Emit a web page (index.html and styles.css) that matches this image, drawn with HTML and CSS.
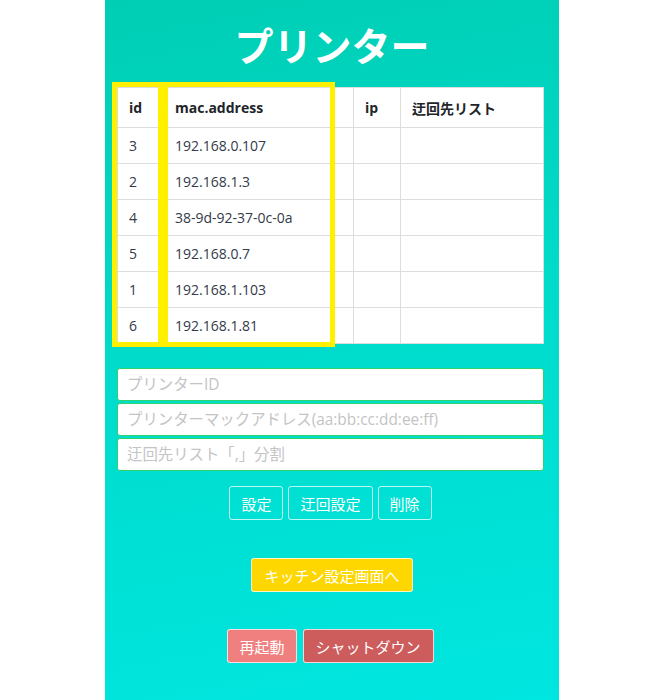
FILE: index.html
```html
<!DOCTYPE html>
<html lang="ja">
<head>
    <meta charset="UTF-8">
    <meta name="viewport" content="width=device-width, initial-scale=1.0">
    <title>プリンター</title>
    <link rel="stylesheet" href="styles.css">
</head>
<body>
    <div class="panel">
        <h1 class="title">プリンター</h1>

        <div class="tableWrap">
            <table class="printerTable">
                <thead>
                    <tr>
                        <th class="colId">id</th>
                        <th class="colMac">mac.address</th>
                        <th class="colIp">ip</th>
                        <th class="colList">迂回先リスト</th>
                    </tr>
                </thead>
                <tbody>
                    <tr><td>3</td><td>192.168.0.107</td><td></td><td></td></tr>
                    <tr><td>2</td><td>192.168.1.3</td><td></td><td></td></tr>
                    <tr><td>4</td><td>38-9d-92-37-0c-0a</td><td></td><td></td></tr>
                    <tr><td>5</td><td>192.168.0.7</td><td></td><td></td></tr>
                    <tr><td>1</td><td>192.168.1.103</td><td></td><td></td></tr>
                    <tr><td>6</td><td>192.168.1.81</td><td></td><td></td></tr>
                </tbody>
            </table>
            <!-- 選択中の列のハイライト -->
            <div class="mark markId"></div>
            <div class="mark markMac"></div>
        </div>

        <div class="form">
            <input type="text" class="field" placeholder="プリンターID">
            <input type="text" class="field" placeholder="プリンターマックアドレス(aa:bb:cc:dd:ee:ff)">
            <input type="text" class="field" placeholder="迂回先リスト「,」分割">
        </div>

        <div class="actions">
            <button class="btn">設定</button>
            <button class="btn">迂回設定</button>
            <button class="btn">削除</button>
        </div>

        <div class="actions kitchen">
            <button class="btn btnYellow">キッチン設定画面へ</button>
        </div>

        <div class="actions power">
            <button class="btn btnReboot">再起動</button>
            <button class="btn btnShutdown">シャットダウン</button>
        </div>
    </div>
</body>
</html>
```

FILE: styles.css
```css
html, body {
    margin: 0;
    padding: 0;
    background: #ffffff;
}

body {
    font-family: "Open Sans", "Noto Sans CJK JP", sans-serif;
    color: #212529;
}

.panel {
    width: 454px;
    min-height: 700px;
    margin: 0 auto 0 105px;
    background: linear-gradient(170deg, #00ceb4 0%, #00dccc 50%, #00e6e0 100%);
    padding: 0 12px;
    box-sizing: border-box;
}

.title {
    margin: 0;
    padding-top: 20px;
    height: 87px;
    box-sizing: border-box;
    font-family: "Noto Sans CJK JP", sans-serif;
    font-size: 39px;
    line-height: 48px;
    font-weight: bold;
    color: #ffffff;
    text-align: center;
}

/* テーブル */
.tableWrap {
    position: relative;
    width: 427px;
}

.printerTable {
    width: 427px;
    border-collapse: collapse;
    background: #ffffff;
    font-size: 14px;
    table-layout: fixed;
}

.printerTable th,
.printerTable td {
    border: 1px solid #dddddd;
    text-align: left;
    padding: 0 11px;
    height: 36px;
    box-sizing: border-box;
}

.printerTable th {
    height: 40px;
    font-weight: bold;
    color: #212529;
}

.printerTable td {
    color: #333a4a;
}

.colId { width: 46px; }
.colMac { width: 190px; }
.colIp { width: 47px; }

.mark {
    position: absolute;
    top: -5px;
    height: 265px;
    border: 5px solid #fff000;
    box-sizing: border-box;
}

.markId {
    left: -5px;
    width: 51px;
}

.markMac {
    left: 46px;
    width: 172px;
}

/* 入力欄 */
.form {
    margin-top: 24px;
    display: flex;
    flex-direction: column;
    gap: 2px;
}

.field {
    width: 427px;
    height: 33px;
    box-sizing: border-box;
    border: 1px solid #2ed36a;
    border-radius: 3px;
    padding: 0 9px;
    font-family: "Open Sans", "Noto Sans CJK JP", sans-serif;
    font-size: 15.4px;
    background: #ffffff;
}

.field::placeholder {
    color: #c4c4c4;
}

/* ボタン */
.actions {
    display: flex;
    justify-content: center;
    gap: 5px;
    margin-top: 15px;
    padding-right: 3px;
}

.btn {
    height: 34px;
    padding: 0 11px;
    font-family: "Noto Sans CJK JP", sans-serif;
    font-size: 15px;
    color: #ffffff;
    background: transparent;
    border: 1px solid rgba(255, 255, 255, 0.75);
    border-radius: 3px;
    cursor: pointer;
}

.kitchen {
    margin-top: 38px;
    padding-right: 0;
}

.btnYellow {
    background: #ffd700;
    padding: 0 12px;
}

.power {
    margin-top: 37px;
    gap: 6px;
}

.btnReboot {
    background: #f08080;
}

.btnShutdown {
    background: #cd5c5c;
    padding: 0 12px;
}
```
